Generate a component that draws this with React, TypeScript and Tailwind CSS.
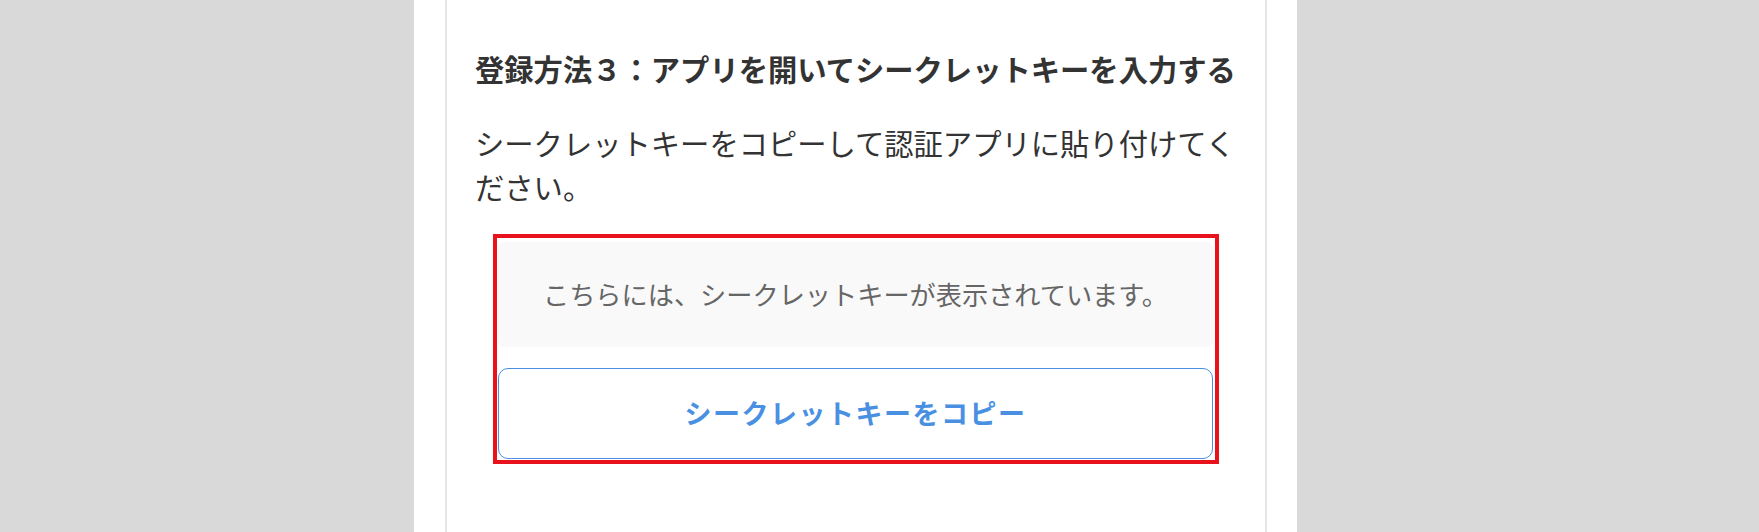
import React from "react";

export default function App() {
  return (
    <div
      className="flex h-[532px] w-full justify-start overflow-hidden bg-[#d9d9d9] pl-[414px]"
      style={{ fontFamily: '"Noto Sans CJK JP", "Noto Sans", sans-serif' }}
    >
      <div className="w-[883px] shrink-0 bg-white pl-[31px] pr-[30px]">
        <div className="h-full border-x-2 border-[#e6e6e6] px-[28px] pt-[48px]">
          <h2 className="text-[29.3px] font-bold leading-[40px] text-[#333333]">
            登録方法３：アプリを開いてシークレットキーを入力する
          </h2>
          <p className="mt-[32px] text-[29.3px] leading-[44px] text-[#333333]">
            シークレットキーをコピーして認証アプリに貼り付けてください。
          </p>
          <div className="mx-[18px] mt-[26px] border-4 border-[#e8121d] pb-px pl-px pr-0.5 pt-1">
            <div className="flex h-[105px] items-center justify-center rounded-md bg-[#f9f9f9] text-[26.2px] text-[#666666]">
              こちらには、シークレットキーが表示されています。
            </div>
            <button className="mt-[21px] flex h-[91px] w-full items-center justify-center rounded-[10px] border border-[#4a90e2] bg-white text-[27px] font-bold tracking-[1.5px] text-[#4a90e2]">
              シークレットキーをコピー
            </button>
          </div>
        </div>
      </div>
    </div>
  );
}
